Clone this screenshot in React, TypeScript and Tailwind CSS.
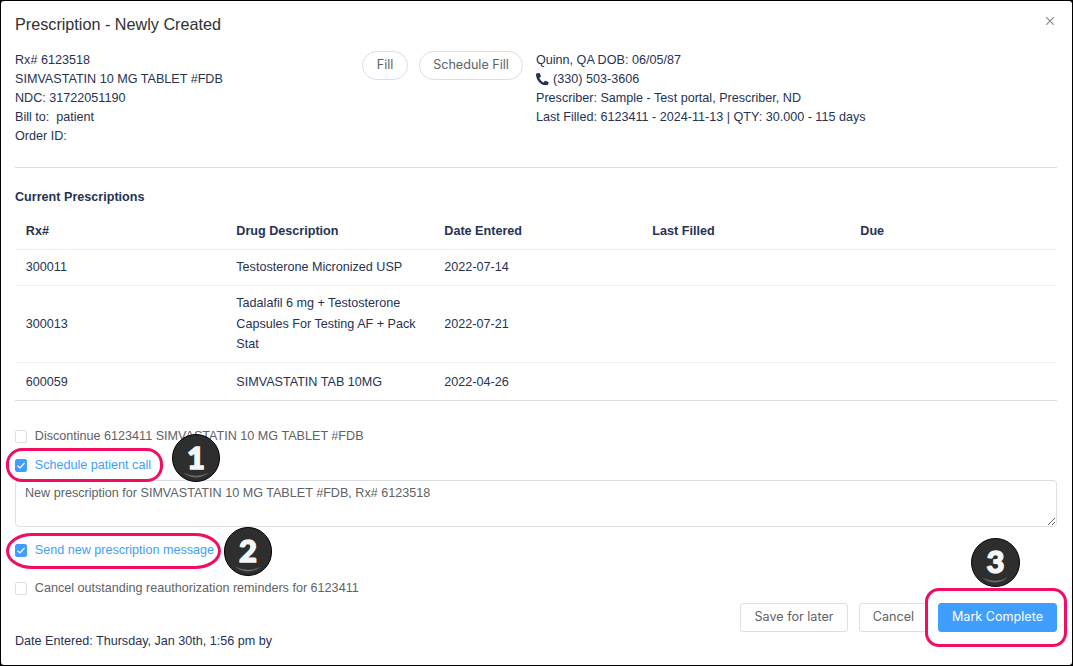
import type { ReactNode } from 'react';
import { FaPhoneAlt } from 'react-icons/fa';

type Prescription = { rx: string; drug: string; entered: string; row: string };

const prescriptions: Prescription[] = [
  { rx: '300011', drug: 'Testosterone Micronized USP', entered: '2022-07-14', row: 'h-9 border-[#ebeef5]' },
  { rx: '300013', drug: 'Tadalafil 6 mg + Testosterone Capsules For Testing AF + Pack Stat', entered: '2022-07-21', row: 'h-[77px] border-[#ebeef5]' },
  { rx: '600059', drug: 'SIMVASTATIN TAB 10MG', entered: '2022-04-26', row: 'h-[38px] pt-px border-[#dcdfe6]' },
];

const columns = 'grid grid-cols-[210.5px_208px_208px_208px_1fr] items-center pl-[10.8px]';

function Badge({ n, className }: { n: number; className: string }) {
  return (
    <div className={`absolute flex items-center justify-center rounded-full border border-black bg-[#2e2e2e] pb-[2px] font-['Lato',sans-serif] text-[31px] leading-none font-black text-[#f6f6f6] [-webkit-text-stroke:1.4px_#f6f6f6] ${className}`}>
      <span>{n}</span>
      <svg className="absolute bottom-[3px] left-[10px]" width="26" height="6" viewBox="0 0 26 6">
        <path d="M0 .5Q13 7 26 .5Q13 10.5 0 .5Z" fill="#6a6a6a" />
      </svg>
    </div>
  );
}

function Option({ checked, children, className }: { checked?: boolean; children: ReactNode; className: string }) {
  return (
    <label className={`flex items-center ${checked ? 'text-[#409eff]' : 'text-[#606266]'} ${className}`}>
      <span className={`mt-px mr-[7.8px] flex h-[13px] w-[12px] shrink-0 items-center justify-center rounded-[2px] border ${checked ? 'border-[#409eff] bg-[#409eff]' : 'border-[#dcdfe6] bg-white'}`}>
        {checked && (
          <svg width="10" height="10" viewBox="0 0 10 10" fill="none" stroke="white" strokeWidth="1.2">
            <path d="M1.5 4.7L4 7L8.5 2" />
          </svg>
        )}
      </span>
      <span className="whitespace-nowrap">{children}</span>
    </label>
  );
}

function Button({ children, className }: { children: ReactNode; className: string }) {
  return (
    <button className={`flex h-[29px] items-center justify-center border pb-[2px] font-['Inter',sans-serif] text-[12.6px] whitespace-nowrap ${className}`}>
      {children}
    </button>
  );
}

export default function App() {
  return (
    <div className="h-[666px] w-[1073px] bg-black p-px">
      <div className="relative flex h-[664px] w-[1071px] flex-col rounded-[3px] bg-white pr-[15px] pl-[14px] font-['Liberation_Sans',Arial,sans-serif] text-[12.6px] leading-[19px] text-[#273253]">
        <div className="flex h-[50px] shrink-0 items-start justify-between">
          <h1 className="pt-[11px] text-[16.2px] leading-6 text-[#303133]">Prescription - Newly Created</h1>
          <svg className="mt-[16px] mr-[3px]" width="8" height="8" viewBox="0 0 8 8" fill="none" stroke="#85888f" strokeWidth="1.2">
            <path d="M.2 .2L7.8 7.8M7.8 .2L.2 7.8" />
          </svg>
        </div>
        <div className="flex h-[117px] shrink-0 border-b border-[#dcdfe6]">
          <div className="w-[347px] whitespace-pre">
            <p>Rx# 6123518</p>
            <p>SIMVASTATIN 10 MG TABLET #FDB</p>
            <p>NDC: 31722051190</p>
            <p>{'Bill to:  patient'}</p>
            <p>Order ID:</p>
          </div>
          <div className="flex w-[174px] gap-[11px]">
            <Button className="w-[46px] rounded-full border-[#dcdfe6] text-[#606266]">Fill</Button>
            <Button className="w-[104px] rounded-full border-[#dcdfe6] text-[#606266]">Schedule Fill</Button>
          </div>
          <div className="whitespace-nowrap">
            <p>Quinn, QA DOB: 06/05/87</p>
            <p className="flex items-center"><FaPhoneAlt className="mr-[4.5px] -mt-px h-[12.6px] w-[12.6px]" />(330) 503-3606</p>
            <p>Prescriber: Sample - Test portal, Prescriber, ND</p>
            <p>Last Filled: 6123411 - 2024-11-13 | QTY: 30.000 - 115 days</p>
          </div>
        </div>
        <h2 className="mt-[20px] shrink-0 font-bold">Current Prescriptions</h2>
        <div className={`${columns} mt-[6px] h-[37px] shrink-0 border-b border-[#ebeef5] pt-px font-bold`}>
          <span>Rx#</span><span>Drug Description</span><span>Date Entered</span><span>Last Filled</span><span>Due</span>
        </div>
        {prescriptions.map((p) => (
          <div key={p.rx} className={`${columns} ${p.row} shrink-0 border-b leading-[20.4px]`}>
            <span>{p.rx}</span><span className="pr-5">{p.drug}</span><span>{p.entered}</span>
          </div>
        ))}
        <Option className="mt-[25px] h-5 shrink-0">Discontinue 6123411 SIMVASTATIN 10 MG TABLET #FDB</Option>
        <Option checked className="mt-[9px] h-5 shrink-0">Schedule patient call</Option>
        <textarea className="mt-[5px] block h-[47px] w-full shrink-0 resize-y rounded-[4px] border border-[#dcdfe6] px-[9px] pt-[3px] text-[#606266] outline-none" defaultValue="New prescription for SIMVASTATIN 10 MG TABLET #FDB, Rx# 6123518" />
        <Option checked className="mt-[13px] h-5 shrink-0">Send new prescription message</Option>
        <Option className="mt-[18px] h-5 shrink-0">Cancel outstanding reauthorization reminders for 6123411</Option>
        <div className="mt-[5px] flex shrink-0 justify-end">
          <Button className="mr-[11px] w-[108px] rounded-[3px] border-[#dcdfe6] text-[#606266]">Save for later</Button>
          <Button className="mr-[10px] w-[69px] rounded-[3px] border-[#dcdfe6] text-[#606266]">Cancel</Button>
          <Button className="w-[119px] rounded-[3px] border-[#409eff] bg-[#409eff] text-white">Mark Complete</Button>
        </div>
        <p className="shrink-0">Date Entered: Thursday, Jan 30th, 1:56 pm by</p>

        <div className="absolute top-[447px] left-[5px] h-[34px] w-[157px] rounded-[16px] border-3 border-[#f20d63]" />
        <div className="absolute top-[532px] left-[5px] h-[36px] w-[215px] rounded-[26px/18px] border-3 border-[#f20d63]" />
        <div className="absolute top-[587px] left-[924px] h-[59px] w-[142px] rounded-[14px] border-3 border-[#f20d63]" />
        <Badge n={1} className="top-[433px] left-[171px] h-12 w-12" />
        <Badge n={2} className="top-[526px] left-[223px] h-[49px] w-12" />
        <Badge n={3} className="top-[537px] left-[970px] h-[49px] w-[49px]" />
      </div>
    </div>
  );
}
